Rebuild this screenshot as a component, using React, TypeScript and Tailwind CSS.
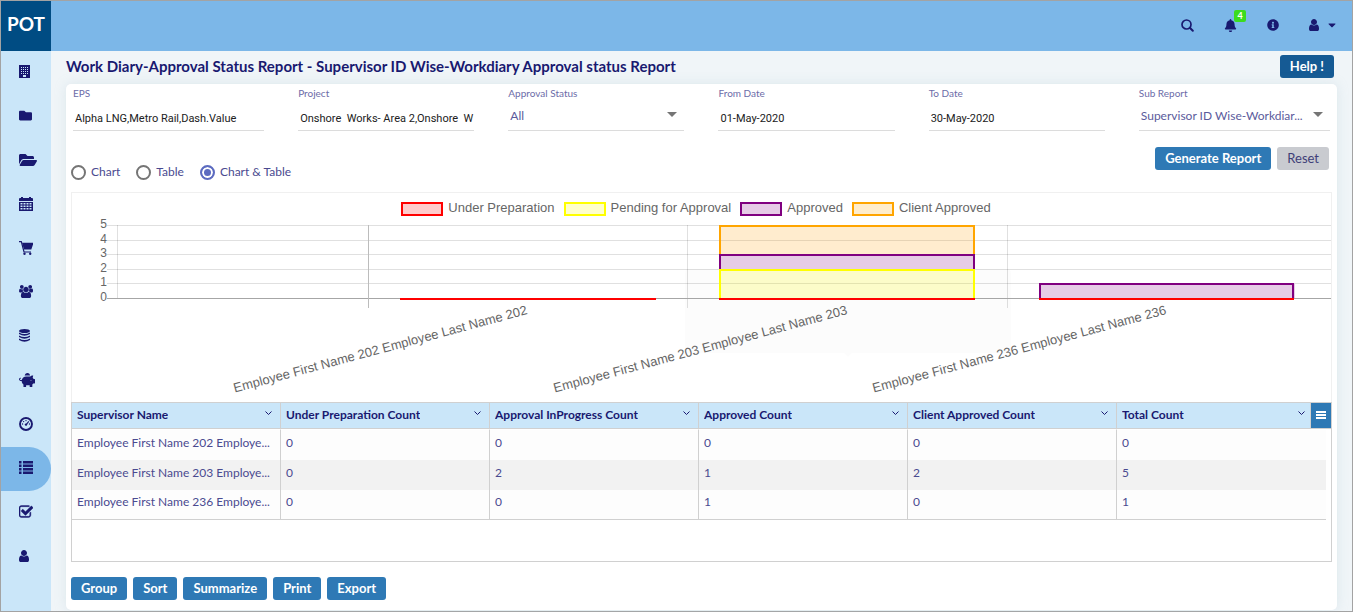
import { useState } from "react";
import type { ReactNode } from "react";
import { FaBell, FaCaretDown, FaFolder, FaFolderOpen, FaInfoCircle, FaPiggyBank } from "react-icons/fa";

const UserIcon = ({ className }: { className: string }) => (
  <svg viewBox="0 0 1280 1792" className={className} fill="currentColor" aria-hidden="true">
    <path d="M1280 1399q0 109-62.5 187t-150.5 78h-854q-88 0-150.5-78t-62.5-187q0-85 8.5-160.5t31.5-152 58.5-131 94-89 134.5-34.5q131 128 313 128t313-128q76 0 134.5 34.5t94 89 58.5 131 31.5 152 8.5 160.5zm-256-887q0 159-112.5 271.5t-271.5 112.5-271.5-112.5-112.5-271.5 112.5-271.5 271.5-112.5 271.5 112.5 112.5 271.5z" />
  </svg>
);

const BuildingIcon = () => (
  <svg viewBox="0 0 11 13" className="h-[13px] w-[11px]" aria-hidden="true">
    <path
      fill="currentColor"
      fillRule="evenodd"
      d="M0 0H11V13H0ZM2 2V3H3V2ZM4 2V3H5V2ZM6 2V3H7V2ZM8 2V3H9V2ZM2 4V5H3V4ZM4 4V5H5V4ZM6 4V5H7V4ZM8 4V5H9V4ZM2 6V7H3V6ZM4 6V7H5V6ZM6 6V7H7V6ZM8 6V7H9V6ZM2 8V9H3V8ZM4 8V9H5V8ZM6 8V9H7V8ZM8 8V9H9V8ZM4 10V12H7V10Z"
    />
  </svg>
);

const CalendarIcon = () => (
  <svg viewBox="0 0 14 14" className="size-[14px]" aria-hidden="true">
    <path
      fill="currentColor"
      fillRule="evenodd"
      d="M2 0H4V1H10V0H12V1H13Q14 1 14 2V4H0V2Q0 1 1 1H2ZM0 5H14V14H0ZM1.500 6V7.500H3.500V6ZM4.500 6V7.500H6.500V6ZM7.500 6V7.500H9.500V6ZM10.500 6V7.500H12.500V6ZM1.500 8.500V10H3.500V8.500ZM4.500 8.500V10H6.500V8.500ZM7.500 8.500V10H9.500V8.500ZM10.500 8.500V10H12.500V8.500ZM1.500 11V12.500H3.500V11ZM4.500 11V12.500H6.500V11ZM7.500 11V12.500H9.500V11ZM10.500 11V12.500H12.500V11Z"
    />
  </svg>
);

const CartIcon = () => (
  <svg viewBox="0 0 14 14" className="size-[14px]" aria-hidden="true">
    <path d="M0 0.700H2.300L5 11H12" fill="none" stroke="currentColor" strokeWidth="1.200" />
    <path d="M3 1.800H14V3.500L12.300 8.500H5Z" fill="currentColor" />
    <circle cx="5.500" cy="12.800" r="1.200" fill="currentColor" />
    <circle cx="11.200" cy="12.800" r="1.200" fill="currentColor" />
  </svg>
);

const UsersIcon = () => (
  <svg viewBox="64 0 1920 1792" className="h-[13px] w-[14px]" fill="currentColor" aria-hidden="true">
    <path d="M657 896q-162 5-265 128h-134q-82 0-138-40.500t-56-118.500q0-353 124-353 6 0 43.500 21t97.500 42.500 119 21.500q67 0 133-23-5 37-5 66 0 159 90 294zm1071 637q0 120-73 189.500t-194 69.500h-874q-121 0-194-69.500t-73-189.500q0-53 3.500-103.500t14-109 26.500-108.500 43-97.500 62-81 85.500-53.500 111.500-20q10 0 43 21.500t73 48 107 48 135 21.500 135-21.500 107-48 73-48 43-21.500q61 0 111.500 20t85.500 53.500 62 81 43 97.500 26.500 108.500 14 109 3.500 103.500zm-1024-1277q0 106-75 181t-181 75-181-75-75-181 75-181 181-75 181 75 75 181zm704 384q0 159-112.500 271.500t-271.500 112.500-271.500-112.500-112.500-271.500 112.500-271.500 271.500-112.500 271.500 112.500 112.500 271.500zm576 225q0 78-56 118.500t-138 40.500h-134q-103-123-265-128 90-135 90-294 0-29-5-66 66 23 133 23 59 0 119-21.500t97.500-42.500 43.500-21q124 0 124 353zm-128-609q0 106-75 181t-181 75-181-75-75-181 75-181 181-75 181 75 75 181z" />
  </svg>
);

const DatabaseIcon = () => (
  <svg viewBox="0 0 11 13" className="h-[13px] w-[11px]" fill="currentColor" aria-hidden="true">
    <ellipse cx="5.500" cy="2" rx="5.500" ry="2" />
    <path d="M0 3.400Q5.500 6.400 11 3.400V5Q5.500 8.400 0 5ZM0 6.400Q5.500 9.400 11 6.400V8Q5.500 11.400 0 8ZM0 9.400Q5.500 12.400 11 9.400V11Q5.500 14.600 0 11Z" />
  </svg>
);

const GaugeIcon = () => (
  <svg viewBox="0 0 14 14" className="size-[14px]" aria-hidden="true">
    <circle cx="7" cy="7" r="6" fill="none" stroke="currentColor" strokeWidth="1.900" />
    <g fill="currentColor">
      <circle cx="3.500" cy="7" r="0.700" />
      <circle cx="4.600" cy="4.600" r="0.700" />
      <circle cx="7" cy="3.600" r="0.700" />
      <circle cx="10.500" cy="7" r="0.700" />
      <circle cx="7" cy="7.600" r="1.200" />
    </g>
    <path d="M7 7.800L9.800 4.400" stroke="currentColor" strokeWidth="1.100" />
  </svg>
);

const ListIcon = () => (
  <svg viewBox="0 0 14 13" className="h-[13px] w-[14px]" fill="currentColor" aria-hidden="true">
    <path d="M0 0H2.500V2.500H0ZM4 0H14V2.500H4ZM0 3.500H2.500V6H0ZM4 3.500H14V6H4ZM0 7H2.500V9.500H0ZM4 7H14V9.500H4ZM0 10.500H2.500V13H0ZM4 10.500H14V13H4Z" />
  </svg>
);

const CheckIcon = () => (
  <svg viewBox="64 128 1664 1408" className="h-[13px] w-[14px]" fill="currentColor" stroke="currentColor" strokeWidth="50" aria-hidden="true">
    <path d="M1472 930v318q0 119-84.500 203.500t-203.500 84.500h-832q-119 0-203.500-84.500t-84.500-203.500v-832q0-119 84.500-203.500t203.500-84.500h832q63 0 117 25 15 7 18 23 3 17-9 29l-49 49q-10 10-23 10-3 0-9-2-23-6-45-6h-832q-66 0-113 47t-47 113v832q0 66 47 113t113 47h832q66 0 113-47t47-113v-254q0-13 9-22l64-64q10-10 23-10 6 0 12 3 20 8 20 29zm231-489l-814 814q-24 24-57 24t-57-24l-430-430q-24-24-24-57t24-57l110-110q24-24 57-24t57 24l263 263 647-647q24-24 57-24t57 24l110 110q24 24 24 57t-24 57z" />
  </svg>
);

const SearchIcon = () => (
  <svg viewBox="0 0 13 13" className="size-[13px]" fill="none" stroke="currentColor" aria-hidden="true">
    <circle cx="5.500" cy="5.500" r="4.500" strokeWidth="1.700" />
    <path d="M8.800 8.800L11.800 11.800" strokeWidth="2" strokeLinecap="round" />
  </svg>
);

const navItems: { label: string; icon: ReactNode; active?: boolean }[] = [
  { label: "Company", icon: <BuildingIcon /> },
  { label: "Folders", icon: <FaFolder className="size-[13px]" /> },
  { label: "Projects", icon: <FaFolderOpen className="size-[18px]" /> },
  { label: "Calendar", icon: <CalendarIcon /> },
  { label: "Procurement", icon: <CartIcon /> },
  { label: "Teams", icon: <UsersIcon /> },
  { label: "Data", icon: <DatabaseIcon /> },
  { label: "Budget", icon: <FaPiggyBank className="size-4" /> },
  { label: "Dashboard", icon: <GaugeIcon /> },
  { label: "Reports", icon: <ListIcon />, active: true },
  { label: "Approvals", icon: <CheckIcon /> },
  { label: "Profile", icon: <UserIcon className="h-[14px] w-[10px]" /> },
];

function TextField({ id, label, value }: { id: string; label: string; value: string }) {
  return (
    <div className="min-w-0">
      <label htmlFor={id} className="block text-[10px] leading-4 text-[#6c6ca8]">
        {label}
      </label>
      <div className="h-[30px] border-b border-[#dcdcdc] pt-[7px] pl-0.5">
        <input
          id={id}
          defaultValue={value}
          className="block h-5 w-full bg-transparent font-['Roboto',sans-serif] text-[11px] text-[#212121] outline-none"
        />
      </div>
    </div>
  );
}

function SelectField({ id, label, value }: { id: string; label: string; value: string }) {
  return (
    <div className="min-w-0">
      <label htmlFor={id} className="block text-[10px] leading-4 text-[#6c6ca8]">
        {label}
      </label>
      <div className="flex h-[30px] items-start border-b border-[#dcdcdc] pt-[5px] pl-0.5">
        <select
          id={id}
          className="-mr-4 h-5 w-full min-w-0 appearance-none bg-transparent pr-4 text-xs text-[#5b5b9c] outline-none"
        >
          <option>{value}</option>
        </select>
        <svg viewBox="0 0 10 5" className="pointer-events-none mt-1.5 mr-[7px] h-[5px] w-[10px] shrink-0" aria-hidden="true">
          <path d="M0 0H10L5 5Z" fill="#757575" />
        </svg>
      </div>
    </div>
  );
}

const legend = [
  { label: "Under Preparation", swatch: "border-[#ff0000] bg-[#ffcccc]" },
  { label: "Pending for Approval", swatch: "border-[#ffff00] bg-[#ffffcc]" },
  { label: "Approved", swatch: "border-[#800080] bg-[#e6cce6]" },
  { label: "Client Approved", swatch: "border-[#ffa500] bg-[#ffedcc]" },
];

const ticks = [
  { value: 5, y: 5 },
  { value: 4, y: 20 },
  { value: 3, y: 34 },
  { value: 2, y: 49 },
  { value: 1, y: 63 },
  { value: 0, y: 78 },
];

const employees = [
  { name: "Employee First Name 202 Employee Last Name 202", x: 456 },
  { name: "Employee First Name 203 Employee Last Name 203", x: 776 },
  { name: "Employee First Name 236 Employee Last Name 236", x: 1095 },
];

function StatusChart() {
  return (
    <section aria-label="Approval status chart" className="border border-b-0 border-[#f0f0f0]">
      <div className="flex h-[27px] items-center justify-center gap-[9px] pt-1 pr-[11px] font-['Liberation_Sans',Arial,sans-serif] text-[13px] text-[#666]">
        {legend.map((item) => (
          <div key={item.label} className="flex items-center gap-[5px]">
            <span className={`h-[14px] w-[42px] border-2 ${item.swatch}`} />
            <span className="pb-0.5 leading-4">{item.label}</span>
          </div>
        ))}
      </div>
      <svg viewBox="0 0 1259 182" className="block h-auto w-full overflow-visible" role="img" aria-label="Counts by supervisor">
        <path d="M616 49H935Q939 49 939 53V133H780L776 137L772 133H613V53Q613 49 616 49Z" fill="#000" fillOpacity="0.012" />
        <g stroke="#000" strokeOpacity="0.12">
          {ticks.slice(0, 5).map((t) => (
            <path key={t.value} d={`M35 ${t.y + 0.5}H1259`} />
          ))}
          <path d="M45.500 5V78M615.500 5V88M935.500 5V88" />
        </g>
        <path d="M35 78.500H1259" stroke="#a6a6a6" />
        <path d="M296.500 5V88" stroke="#bcbcbc" />
        <rect x="647" y="49" width="256" height="30" fill="#ffff00" fillOpacity="0.2" />
        <rect x="647" y="34" width="256" height="15" fill="#e6cce6" />
        <rect x="647" y="5" width="256" height="29" fill="#ff9f0a" fillOpacity="0.2" />
        <rect x="967" y="63" width="256" height="15" fill="#e6cce6" />
        <g fill="none" strokeWidth="2">
          <path d="M648 34V6H902V34" stroke="#ffa500" />
          <path d="M648 49V35H902V49" stroke="#800080" />
          <path d="M648 78V50H902V78" stroke="#ffff00" />
          <path d="M968 78V64H1221V78" stroke="#800080" />
          <path d="M328 79H584M647 79H903M967 79H1222" stroke="#ff0000" />
        </g>
        <g fontFamily="'Liberation Sans', Arial, sans-serif" fill="#666">
          <g fontSize="12" textAnchor="end">
            {ticks.map((t) => (
              <text key={t.value} x="35" y={t.y + 3}>
                {t.value}
              </text>
            ))}
          </g>
          <g fontSize="13" textAnchor="end">
            {employees.map((e) => (
              <text key={e.name} transform={`translate(${e.x} 94) rotate(-15)`}>
                {e.name}
              </text>
            ))}
          </g>
        </g>
      </svg>
    </section>
  );
}

const columns = [
  "Supervisor Name",
  "Under Preparation Count",
  "Approval InProgress Count",
  "Approved Count",
  "Client Approved Count",
  "Total Count",
];

const rows = [
  ["Employee First Name 202 Employe...", 0, 0, 0, 0, 0],
  ["Employee First Name 203 Employe...", 0, 2, 1, 2, 5],
  ["Employee First Name 236 Employe...", 0, 0, 1, 0, 1],
];

function StatusTable() {
  return (
    <div className="min-h-[160px] border border-[#d0d0d0]">
      <table className="w-full table-fixed border-separate border-spacing-0 text-left">
        <colgroup>
          {columns.map((c) => (
            <col key={c} />
          ))}
          <col className="w-[5px]" />
        </colgroup>
        <thead className="bg-[#cae6f9] text-xs font-bold text-[#191970]">
          <tr>
            {columns.map((c, i) => (
              <th
                key={c}
                scope="col"
                className={`h-[26px] border-b border-[#d0d0d0] px-0 pt-0 pb-0.5 ${i < 5 ? "border-r" : ""}`}
              >
                <div className={`flex items-center justify-between pl-[5px] ${i < 5 ? "pr-2" : "pr-[21px]"}`}>
                  <span className="truncate">{c}</span>
                  <svg viewBox="0 0 7 5" className="mb-0.5 h-[5px] w-[7px] shrink-0" fill="none" stroke="#191970" aria-hidden="true">
                    <path d="M0.500 0.500L3.500 3.500L6.500 0.500" />
                  </svg>
                </div>
              </th>
            ))}
            <th className="relative border-b border-[#d0d0d0] p-0">
              <button
                type="button"
                aria-label="Table menu"
                className="absolute top-0 right-0 flex h-[25px] w-[21px] items-center justify-center border-l border-[#d0d0d0] bg-[#2e79b5] pr-px pb-px"
              >
                <svg viewBox="0 0 10 8" className="h-2 w-[10px]" fill="#fff" aria-hidden="true">
                  <path d="M0 0H10V2H0ZM0 3H10V5H0ZM0 6H10V8H0Z" />
                </svg>
              </button>
            </th>
          </tr>
        </thead>
        <tbody className="text-xs text-[#4a4a90]">
          {rows.map((row, r) => (
            <tr key={r}>
              {row.map((cell, i) => (
                <td
                  key={i}
                  className={`border-[#d0d0d0] px-[5px] pt-0 pb-[5px] whitespace-nowrap ${r === 0 ? "h-[31px] border-t border-t-white" : "h-[30px]"} ${r === 1 ? "bg-[#f2f2f2]" : "bg-[#fdfdfd]"} ${i < 5 ? "border-r" : ""} ${r === 2 ? "border-b" : ""}`}
                >
                  {cell}
                </td>
              ))}
              <td />
            </tr>
          ))}
        </tbody>
      </table>
    </div>
  );
}

const views = ["Chart", "Table", "Chart & Table"];

export default function App() {
  const [view, setView] = useState("Chart & Table");

  return (
    <div className="flex min-h-screen flex-col border border-[#a3a3a3] bg-[#f0f5f8] font-['Lato',sans-serif] text-[#191970]">
      <header className="flex h-[50px] bg-[#7cb7e8]">
        <a href="#home" className="flex w-[50px] shrink-0 items-center justify-center bg-[#004c83] pb-1 text-[19px] font-bold text-white">
          POT
        </a>
        <div className="flex flex-1 items-center justify-end pr-4 pb-0.5">
          <button type="button" aria-label="Search" className="mr-[30px]">
            <SearchIcon />
          </button>
          <button type="button" aria-label="Notifications" className="relative mr-[30px]">
            <FaBell className="size-[13px]" />
            <span className="absolute -top-[9px] left-[10px] flex h-3 w-3 items-center justify-center rounded-xs bg-[#3bdc1e] text-[9px] font-bold text-white">
              4
            </span>
          </button>
          <button type="button" aria-label="Information" className="mr-[30px]">
            <FaInfoCircle className="size-3" />
          </button>
          <button type="button" aria-label="Account" className="flex items-center gap-[9px]">
            <UserIcon className="h-[14px] w-[10px]" />
            <FaCaretDown className="h-3 w-2" />
          </button>
        </div>
      </header>

      <div className="flex flex-1">
        <nav aria-label="Main" className="w-[50px] shrink-0 bg-[#cae6f9]">
          {navItems.map((item) => (
            <a
              key={item.label}
              href="#section"
              aria-label={item.label}
              aria-current={item.active ? "page" : undefined}
              className={`flex h-11 items-center pb-[3px] pl-[18px] ${item.active ? "rounded-r-full bg-[#7cb7e8]" : ""}`}
            >
              {item.icon}
            </a>
          ))}
        </nav>

        <main className="flex min-w-0 flex-1 flex-col px-[15px]">
          <div className="flex h-[33px] items-center justify-between">
            <h1 className="pb-0.5 text-[15px] font-bold">
              Work Diary-Approval Status Report - Supervisor ID Wise-Workdiary Approval status Report
            </h1>
            <button
              type="button"
              className="mr-[3px] mb-0.5 h-[23px] rounded-[3px] bg-[#155a94] px-[10px] text-[13px] font-bold text-white"
            >
              Help !
            </button>
          </div>

          <div className="mb-px flex-1 rounded-[5px] bg-white px-[5px] pb-[9px] shadow-[0_0_12px_rgba(160,190,205,0.25)]">
            <div className="grid grid-cols-[191fr_176fr_176fr_176fr_176fr_191fr] gap-[34px] px-0.5 pt-px">
              <TextField id="eps" label="EPS" value="Alpha LNG,Metro Rail,Dash.Value" />
              <TextField id="project" label="Project" value="Onshore  Works- Area 2,Onshore  W" />
              <SelectField id="status" label="Approval Status" value="All" />
              <TextField id="from" label="From Date" value="01-May-2020" />
              <TextField id="to" label="To Date" value="30-May-2020" />
              <SelectField id="sub" label="Sub Report" value="Supervisor ID Wise-Workdiar..." />
            </div>

            <div className="flex h-[61px] items-start justify-between pt-4 pr-[3px]">
              <fieldset aria-label="View" className="flex gap-4 pt-[17px]">
                {views.map((v) => (
                  <label key={v} className="flex items-center gap-[5px] text-xs leading-4 text-[#4a4a90]">
                    <input
                      type="radio"
                      name="view"
                      checked={view === v}
                      onChange={() => setView(v)}
                      className="size-[15px] appearance-none rounded-full border-2 border-[#757575] bg-white checked:border-[#5c6bc0] checked:bg-[#5c6bc0] checked:shadow-[inset_0_0_0_2px_#fff]"
                    />
                    {v}
                  </label>
                ))}
              </fieldset>
              <div className="flex gap-[6px]">
                <button type="button" className="h-[23px] rounded-[3px] bg-[#2e79b5] px-[10px] text-[13px] font-bold text-white">
                  Generate Report
                </button>
                <button type="button" className="h-[23px] rounded-[3px] bg-[#c9cbd0] px-[10px] text-[13px] text-[#3f3f78]">
                  Reset
                </button>
              </div>
            </div>

            <StatusChart />
            <StatusTable />

            <div className="flex gap-[6px] pt-[15px]">
              {["Group", "Sort", "Summarize", "Print", "Export"].map((action) => (
                <button
                  key={action}
                  type="button"
                  className="h-[23px] rounded-[3px] bg-[#2e79b5] px-[10px] text-[13px] font-bold text-white"
                >
                  {action}
                </button>
              ))}
            </div>
          </div>
        </main>
      </div>
    </div>
  );
}
